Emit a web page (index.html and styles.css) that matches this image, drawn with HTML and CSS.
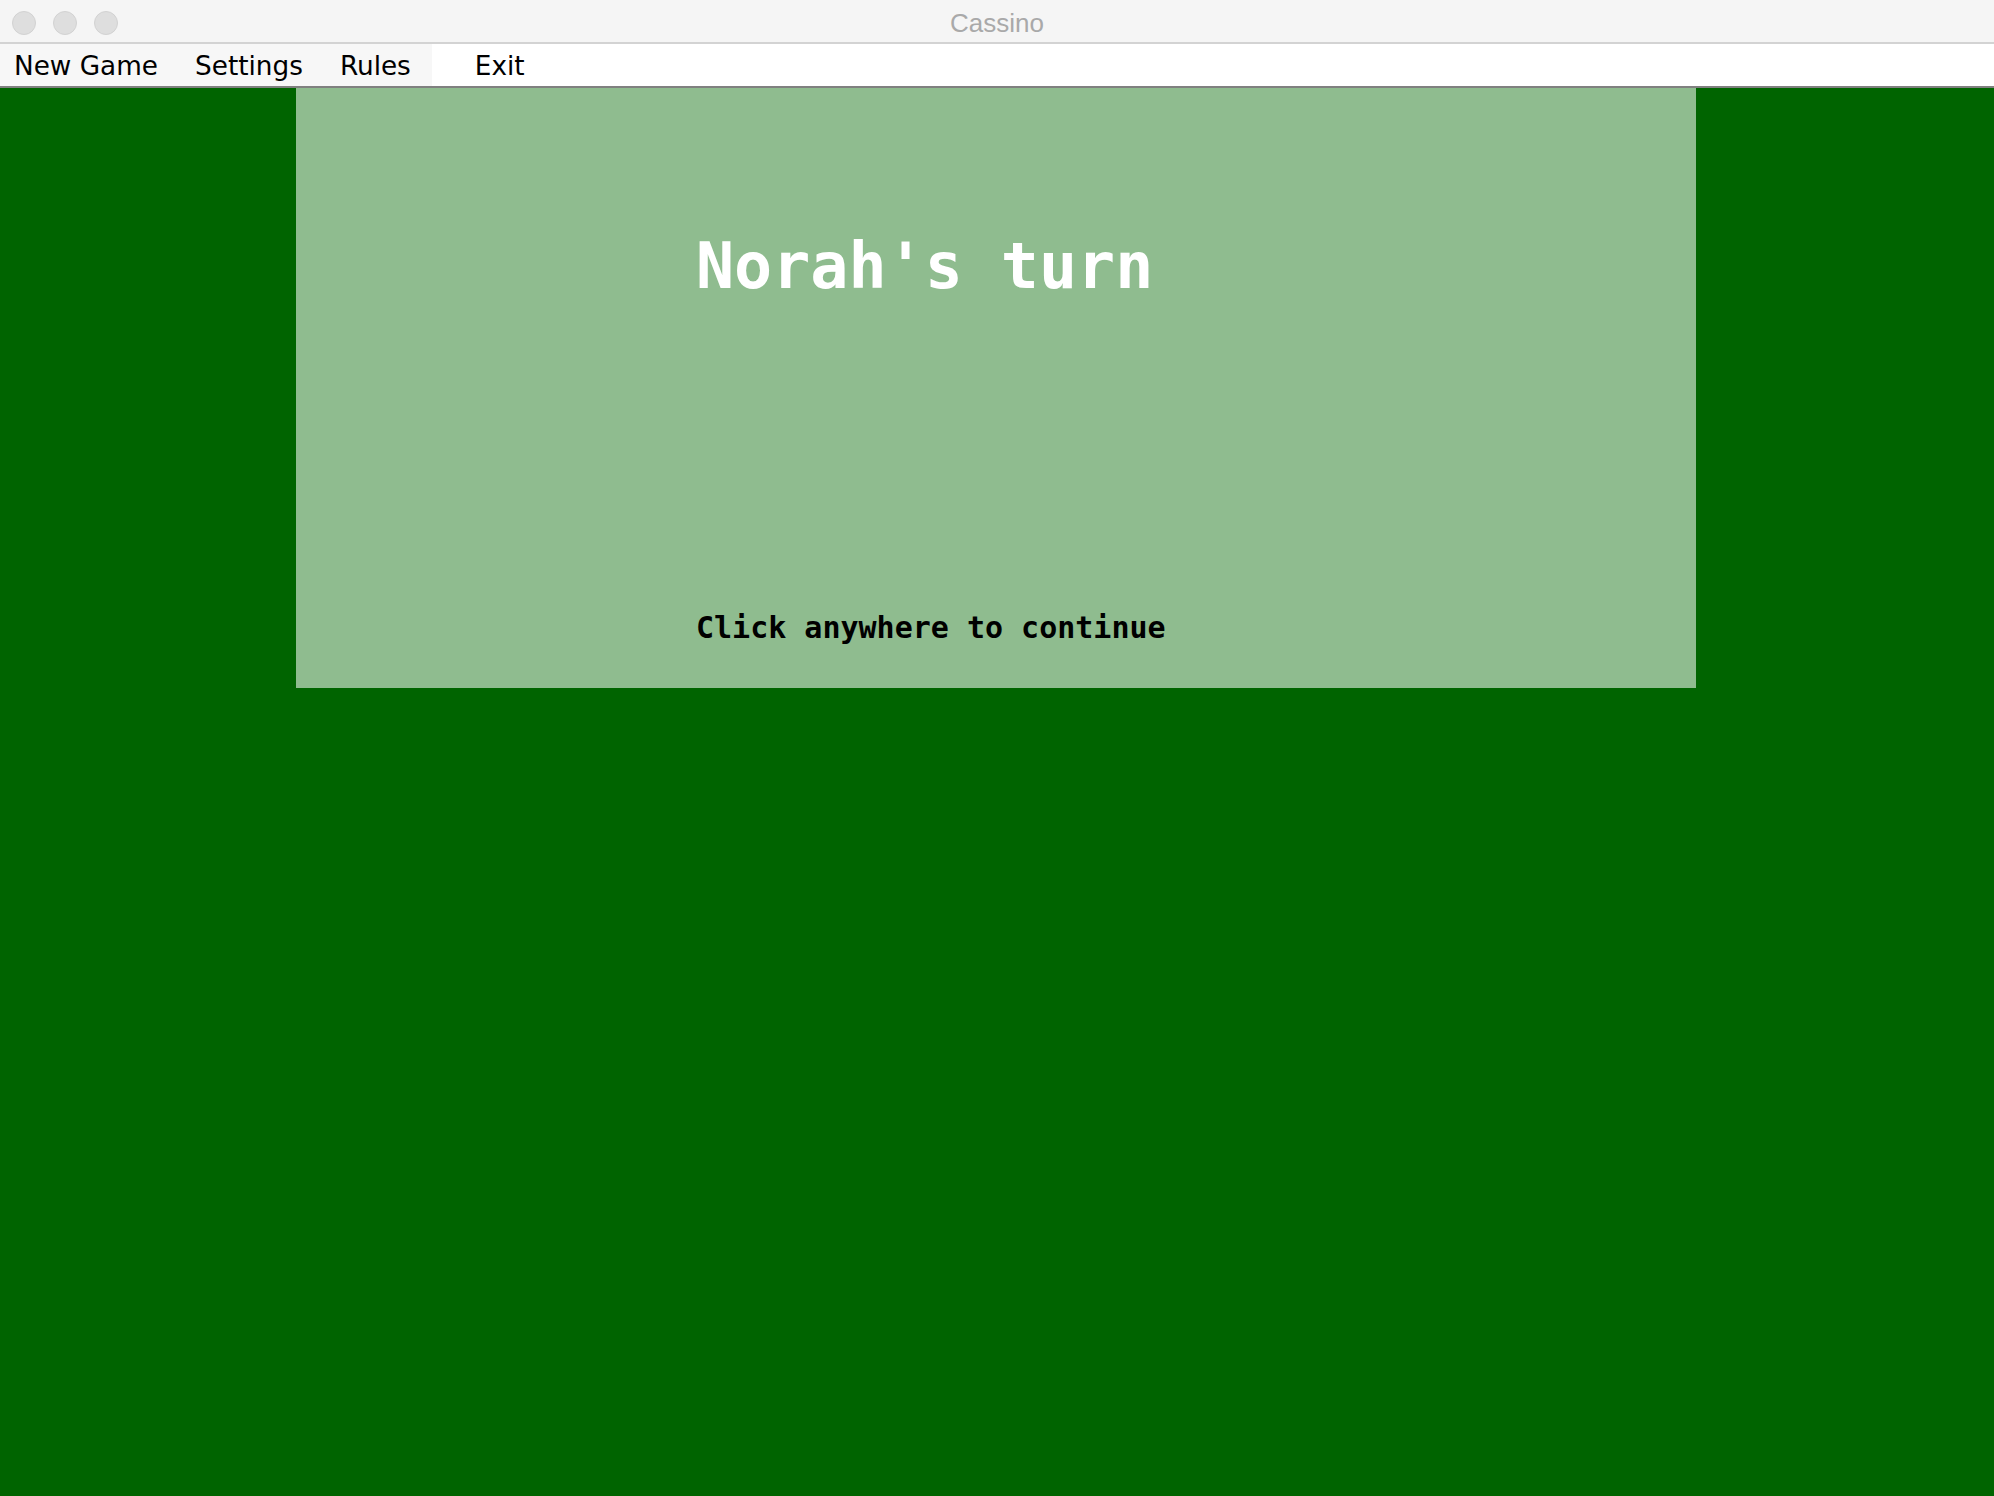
FILE: index.html
```html
<!DOCTYPE html>
<html lang="en">
<head>
<meta charset="utf-8">
<title>Cassino</title>
<link rel="stylesheet" href="styles.css">
</head>
<body>
<div class="window">
  <header class="titlebar">
    <div class="lights">
      <span class="light"></span>
      <span class="light"></span>
      <span class="light"></span>
    </div>
    <div class="title">Cassino</div>
    <div class="spacer"></div>
  </header>
  <nav class="menubar">
    <div class="menus">
      <span class="menu first">New Game</span>
      <span class="menu">Settings</span>
      <span class="menu last">Rules</span>
    </div>
    <span class="exit">Exit</span>
  </nav>
  <main class="table">
    <section class="panel">
      <h1 class="turn">Norah's turn</h1>
      <p class="hint">Click anywhere to continue</p>
    </section>
  </main>
</div>
</body>
</html>
```

FILE: styles.css
```css
html, body {
  margin: 0;
  padding: 0;
  height: 100%;
}

body {
  background: #006400;
}

.window {
  display: flex;
  flex-direction: column;
  height: 100vh;
}

.titlebar {
  display: grid;
  grid-template-columns: 1fr auto 1fr;
  align-items: center;
  height: 42px;
  background: #f5f5f5;
  border-bottom: 2px solid #d3d3d3;
  flex: none;
}

.lights {
  display: flex;
  gap: 17px;
  padding-left: 12px;
  padding-top: 3px;
}

.light {
  width: 22px;
  height: 22px;
  border-radius: 50%;
  background: #dedede;
  border: 1px solid #d2d2d2;
}

.title {
  font-family: "Liberation Sans", Arial, sans-serif;
  font-size: 26px;
  color: #a9a9a9;
  line-height: 42px;
  padding-top: 2px;
  height: 42px;
  box-sizing: border-box;
}

.menubar {
  display: flex;
  height: 42px;
  background: #ffffff;
  border-bottom: 2px solid #808080;
  flex: none;
  font-family: "DejaVu Sans", "Lucida Grande", sans-serif;
  font-size: 26.3px;
  color: #000;
}

.menus {
  display: flex;
  background: #f7f7f7;
}

.menu {
  padding: 2px 18.5px 0 18.5px;
  line-height: 40px;
}

.menu.first {
  padding-left: 14px;
}

.menu.last {
  padding-right: 21px;
}

.exit {
  padding: 2px 0 0 43px;
  line-height: 40px;
}

.table {
  flex: 1;
  background: #006400;
  display: flex;
  align-items: flex-start;
}

.panel {
  margin-left: 296px;
  width: 1400px;
  height: 600px;
  background: #8fbc8f;
  display: flex;
  flex-direction: column;
  padding-left: 400px;
  box-sizing: border-box;
  font-family: "DejaVu Sans Mono", Menlo, monospace;
  font-weight: bold;
}

.turn {
  margin: 146px 0 0 0;
  font-size: 63.3px;
  line-height: 64px;
  color: #ffffff;
  font-weight: bold;
}

.hint {
  margin: 315px 0 0 0;
  font-size: 30px;
  line-height: 30px;
  color: #000000;
}
```
